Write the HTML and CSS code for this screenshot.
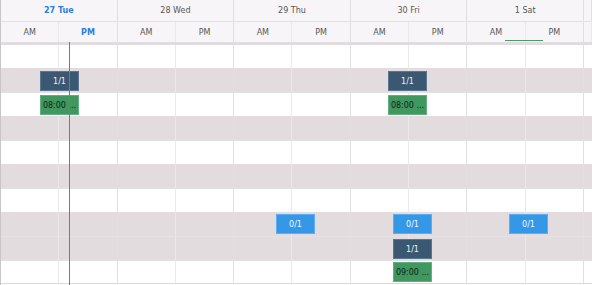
FILE: index.html
```html
<!DOCTYPE html>
<html>
<head>
<meta charset="utf-8">
<link rel="stylesheet" href="styles.css">
</head>
<body>
<div class="sched">
  <div class="hdr days">
    <div class="day cur">27 Tue</div>
    <div class="day">28 Wed</div>
    <div class="day">29 Thu</div>
    <div class="day">30 Fri</div>
    <div class="day">1 Sat</div>
    <div class="day"></div>
  </div>
  <div class="hdr halves">
    <div class="half">AM</div><div class="half cur dayend">PM</div>
    <div class="half">AM</div><div class="half dayend">PM</div>
    <div class="half">AM</div><div class="half dayend">PM</div>
    <div class="half">AM</div><div class="half dayend">PM</div>
    <div class="half">AM</div><div class="half dayend">PM</div>
    <div class="half"></div>
  </div>
  <div class="body">
    <div class="row w"></div>
    <div class="row g"></div>
    <div class="row w"></div>
    <div class="row g"></div>
    <div class="row w"></div>
    <div class="row g"></div>
    <div class="row w"></div>
    <div class="row g"></div>
    <div class="row g"></div>
    <div class="row w last"></div>

    <div class="ev dark" style="left:39px;top:26px">1/1</div>
    <div class="ev green" style="left:39px;top:50px">08:00 ...</div>
    <div class="ev dark" style="left:387px;top:26px">1/1</div>
    <div class="ev green" style="left:387px;top:50px">08:00 ...</div>
    <div class="ev blue" style="left:275px;top:169px">0/1</div>
    <div class="ev blue" style="left:392px;top:169px">0/1</div>
    <div class="ev blue" style="left:508px;top:169px">0/1</div>
    <div class="ev dark" style="left:392px;top:194px">1/1</div>
    <div class="ev green" style="left:392px;top:217px">09:00 ...</div>
  </div>
  <div class="now"></div>
  <div class="sel"></div>
</div>
</body>
</html>
```
FILE: styles.css
```css
html, body {
  margin: 0;
  padding: 0;
  background: #ffffff;
}
.sched {
  position: relative;
  width: 592px;
  height: 285px;
  overflow: hidden;
  border-left: 1px solid #c9c5c8;
  box-sizing: border-box;
  font-family: "DejaVu Sans", Verdana, sans-serif;
  font-size: 8px;
  color: #555;
}
.hdr {
  display: grid;
  background: #f8f5f8;
}
.days {
  grid-template-columns: repeat(5, 116.6px) 1fr;
  height: 22px;
  border-bottom: 1px solid #e4e0e3;
  box-sizing: border-box;
}
.day {
  display: flex;
  align-items: center;
  justify-content: center;
  border-right: 1px solid #e2dee1;
}
.halves {
  grid-template-columns: repeat(10, 58.3px) 1fr;
  height: 20px;
}
.half {
  display: flex;
  align-items: center;
  justify-content: center;
  border-right: 1px solid #ece8eb;
}
.half.dayend { border-right-color: #e2dee1; }
.cur {
  color: #2b7de0;
  font-weight: bold;
}
.body {
  position: relative;
  border-top: 3px solid #e0dcdf;
}
.row {
  height: 24px;
  box-sizing: border-box;
  background-image:
    repeating-linear-gradient(to right, transparent 0, transparent 57.3px, #ebe8ea 57.3px, #ebe8ea 58.3px, transparent 58.3px, transparent 115.6px, #e2dfe1 115.6px, #e2dfe1 116.6px);
}
.row.w { background-color: #ffffff; height: 23px; }
.row.g { background-color: #e2dcdf; height: 25px; border-bottom: 1px solid #e6e1e4; }
.row.g + .row.g { height: 24px; }
.row.last { border-bottom: 1px solid #dcd8db; }
.ev {
  position: absolute;
  width: 39px;
  height: 20px;
  box-sizing: border-box;
  display: flex;
  align-items: center;
  justify-content: center;
  font-size: 8px;
  white-space: nowrap;
  overflow: hidden;
}
.ev.dark {
  background: #3b5873;
  border: 1px solid #5b7690;
  color: #eef2f6;
}
.ev.green {
  background: #409760;
  border: 1px solid #62b07f;
  color: #10241a;
}
.ev.blue {
  background: #3598e6;
  border: 1px solid #5eadf0;
  color: #f2f8ff;
}
.now {
  position: absolute;
  left: 68px;
  top: 42px;
  bottom: 0;
  width: 1px;
  background: #d9505c;
}
.sel {
  position: absolute;
  left: 504px;
  top: 40px;
  width: 38px;
  height: 1px;
  background: #4a9a70;
}
```
